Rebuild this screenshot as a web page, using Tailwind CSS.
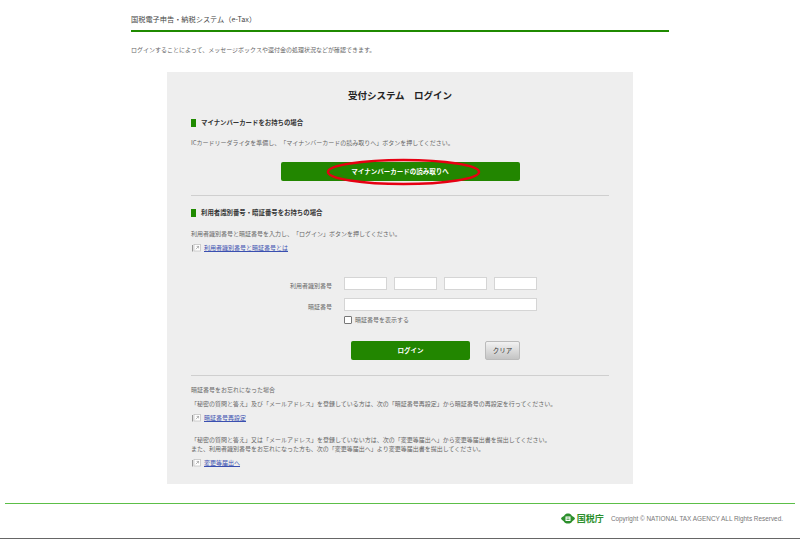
<!DOCTYPE html>
<html lang="ja"><head><meta charset="utf-8">
<script src="https://cdn.jsdelivr.net/npm/@tailwindcss/browser@4"></script>
</head>
<body class="bg-white w-[800px] h-[539px] overflow-hidden [text-spacing-trim:space-all] font-['Noto_Sans_CJK_JP','Liberation_Sans',sans-serif] text-[#555]">
<header class="mx-[131px] w-[538px] h-[32px] border-b-2 border-[#1f8a00] pt-[14px]">
  <p class="text-[7.2px] leading-[10px] text-[#444]">国税電子申告・納税システム（e-Tax）</p>
</header>
<p class="ml-[131px] mt-[14px] text-[6px] leading-[8px] text-[#666]">ログインすることによって、メッセージボックスや還付金の処理状況などが確認できます。</p>
<main class="ml-[167px] mt-[18px] w-[466px] h-[412px] bg-[#eeeeee] px-[24px] pt-[17px]">
  <h1 class="text-center text-[9.5px] leading-[12px] font-bold text-[#222]">受付システム　ログイン</h1>
  <h2 class="mt-[17px] flex items-center gap-[5px] text-[6.4px] leading-[10px] font-bold text-[#333]"><span class="w-[5px] h-[8px] bg-[#1f8a00]"></span>マイナンバーカードをお持ちの場合</h2>
  <p class="mt-[11px] text-[6px] leading-[8px] text-[#666]">ICカードリーダライタを準備し、「マイナンバーカードの読み取りへ」ボタンを押してください。</p>
  <div class="mt-[15px] flex justify-center">
    <div class="relative">
      <button class="block w-[239px] h-[19px] rounded-[2px] bg-[#228600] text-white text-[6.5px] font-bold leading-[19px] text-center">マイナンバーカードの読み取りへ</button>
      <svg class="absolute left-[46px] -top-[3px] overflow-visible" width="153" height="26"><ellipse cx="76.500" cy="13" rx="75.500" ry="12" fill="none" stroke="#e60012" stroke-width="2.500"/></svg>
    </div>
  </div>
  <hr class="mt-[14px] border-t border-[#cfcfcf]">
  <h2 class="mt-[12px] flex items-center gap-[5px] text-[6.4px] leading-[10px] font-bold text-[#333]"><span class="w-[5px] h-[8px] bg-[#1f8a00]"></span>利用者識別番号・暗証番号をお持ちの場合</h2>
  <p class="mt-[12px] text-[6px] leading-[8px] text-[#666]">利用者識別番号と暗証番号を入力し、「ログイン」ボタンを押してください。</p>
  <a class="mt-[5px] flex items-center gap-[3px] text-[6px] leading-[8px] text-[#3a4fb0] underline">
    <svg width="10" height="9" viewBox="0 0 10 9" class="shrink-0"><path d="M1.500 2v6.500" stroke="#999" fill="none"/><rect x="3" y="1.500" width="6.500" height="6.500" fill="#fff" stroke="#bbb" stroke-width=".7"/><path d="M4.800 6.200 7.600 3.400M5.600 3.400h2v2" stroke="#888" stroke-width=".6" fill="none"/></svg>利用者識別番号と暗証番号とは</a>
  <div class="mt-[25px] grid grid-cols-[141px_193px] gap-x-[12px] justify-start text-[6px] text-[#666]">
    <div class="contents">
      <label class="text-right h-[13px] leading-[18px]">利用者識別番号</label>
      <div class="flex justify-between">
        <input class="w-[43px] h-[13px] bg-white border border-[#d5d5d5]"><input class="w-[43px] h-[13px] bg-white border border-[#d5d5d5]"><input class="w-[43px] h-[13px] bg-white border border-[#d5d5d5]"><input class="w-[43px] h-[13px] bg-white border border-[#d5d5d5]">
      </div>
    </div>
    <div class="contents">
      <label class="mt-[8px] text-right h-[13px] leading-[18px]">暗証番号</label>
      <input class="mt-[8px] w-[193px] h-[13px] bg-white border border-[#d5d5d5]">
    </div>
    <div class="col-start-2 mt-[5px] flex items-center gap-[3px] leading-[8px]">
      <span class="w-[8px] h-[8px] rounded-[1px] border border-[#777] bg-white"></span>暗証番号を表示する
    </div>
  </div>
  <div class="mt-[17px] ml-[160px] flex items-center gap-[15px]">
    <button class="w-[119px] h-[19px] rounded-[2px] bg-[#228600] text-white text-[6.5px] font-bold leading-[19px] text-center">ログイン</button>
    <button class="w-[35px] h-[19px] rounded-[2px] bg-gradient-to-b from-[#f2f2f2] to-[#c4c4c4] border border-[#bbb] text-[#333] text-[6.5px] leading-[17px] text-center">クリア</button>
  </div>
  <hr class="mt-[15px] border-t border-[#cfcfcf]">
  <div class="text-[6px] leading-[8px] text-[#666]">
    <p class="mt-[10px]">暗証番号をお忘れになった場合</p>
    <p class="mt-[6px]">「秘密の質問と答え」及び「メールアドレス」を登録している方は、次の「暗証番号再設定」から暗証番号の再設定を行ってください。</p>
    <a class="mt-[5px] flex items-center gap-[3px] text-[#3a4fb0] underline">
      <svg width="10" height="9" viewBox="0 0 10 9" class="shrink-0"><path d="M1.500 2v6.500" stroke="#999" fill="none"/><rect x="3" y="1.500" width="6.500" height="6.500" fill="#fff" stroke="#bbb" stroke-width=".7"/><path d="M4.800 6.200 7.600 3.400M5.600 3.400h2v2" stroke="#888" stroke-width=".6" fill="none"/></svg>暗証番号再設定</a>
    <p class="mt-[14px]">「秘密の質問と答え」又は「メールアドレス」を登録していない方は、次の「変更等届出へ」から変更等届出書を提出してください。</p>
    <p class="mt-[1px]">また、利用者識別番号をお忘れになった方も、次の「変更等届出へ」より変更等届出書を提出してください。</p>
    <a class="mt-[5px] flex items-center gap-[3px] text-[#3a4fb0] underline">
      <svg width="10" height="9" viewBox="0 0 10 9" class="shrink-0"><path d="M1.500 2v6.500" stroke="#999" fill="none"/><rect x="3" y="1.500" width="6.500" height="6.500" fill="#fff" stroke="#bbb" stroke-width=".7"/><path d="M4.800 6.200 7.600 3.400M5.600 3.400h2v2" stroke="#888" stroke-width=".6" fill="none"/></svg>変更等届出へ</a>
  </div>
</main>
<div class="mt-[19px] mx-[5px] h-px bg-[#5cbf48]"></div>
<footer class="mx-[5px] pr-[12px] flex justify-end items-center h-[27px] pt-[2px]">
  <svg width="14" height="11" viewBox="0 0 14 11" class="mr-[2px]"><path d="M0 5.500C1 3.500 2.500 3.500 3 3 4 1 5.500.5 7 .5S10 1 11 3c.5.5 2 .5 3 2.500-1 2-2 2-2.500 2.500C10.500 10 9 10.500 7 10.500S3.500 10 2.500 8C2 7.500 1 7.500 0 5.500z" fill="#2c8f2c"/><rect x="4.500" y="3.500" width="5" height="4.500" fill="#fff"/><path d="M5.500 5h3M5.500 6.500h3" stroke="#2c8f2c" stroke-width=".7"/></svg>
  <span class="text-[9px] font-bold text-[#2c8f2c] leading-[12px] mr-[7px]">国税庁</span>
  <span class="text-[6.4px] leading-[8px] text-[#777] font-['Liberation_Sans',sans-serif]">Copyright © NATIONAL TAX AGENCY ALL Rights Reserved.</span>
</footer>
<div class="mt-[7px] h-px bg-[#666]"></div>
</body></html>
